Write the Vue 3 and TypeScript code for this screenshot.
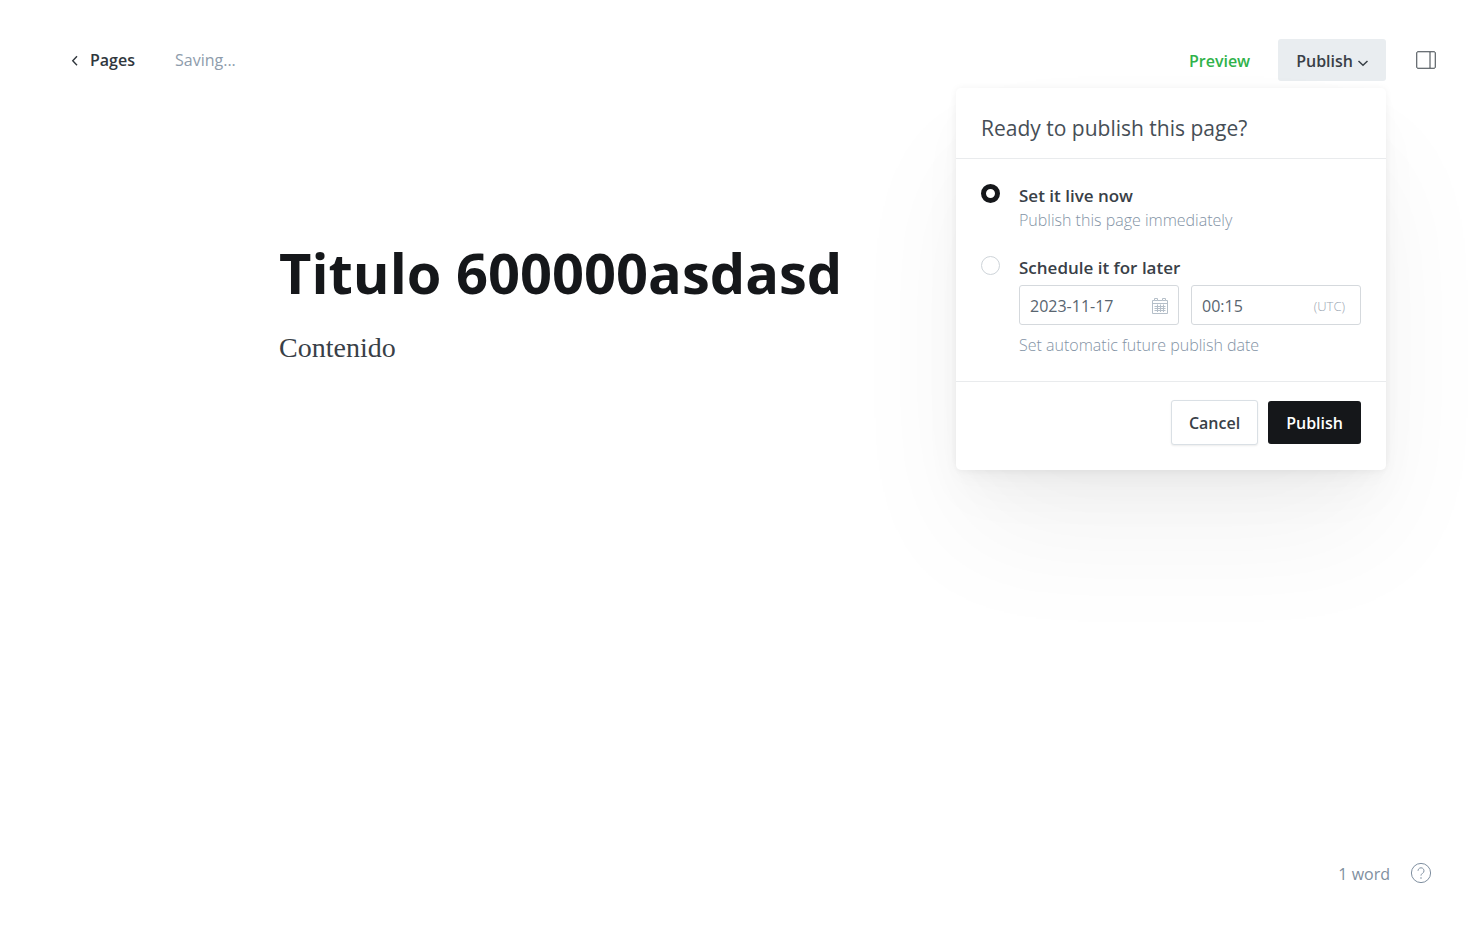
<script setup lang="ts">
import { ref } from 'vue'

const title = ref('Titulo 600000asdasd')
const content = ref('Contenido')
const mode = ref<'now' | 'later'>('now')
const date = ref('2023-11-17')
const time = ref('00:15')
const menuOpen = ref(true)
</script>

<template>
  <div class="editor">
    <header class="topbar">
      <a class="back" href="#pages">
        <svg width="8" height="12" viewBox="0 0 8 12" aria-hidden="true"><path d="M7 2.250 2.750 6.750 7 11.250" /></svg>
        <span>Pages</span>
      </a>
      <span class="status">Saving...</span>
      <div class="actions">
        <button type="button" class="preview">Preview</button>
        <div class="publish-menu">
          <button type="button" class="trigger" :aria-expanded="menuOpen" @click="menuOpen = !menuOpen">
            <span>Publish</span>
            <svg width="12" height="8" viewBox="0 0 12 8" aria-hidden="true"><path d="M1.500 2 6 6.250 10.500 2" /></svg>
          </button>
          <form v-if="menuOpen" class="dropdown" @submit.prevent>
            <h2 class="dropdown-title">Ready to publish this page?</h2>
            <div class="options">
              <div class="option">
                <input id="publish-now" v-model="mode" type="radio" name="mode" value="now" class="radio">
                <div class="option-body">
                  <label for="publish-now" class="option-label">Set it live now</label>
                  <p class="option-note">Publish this page immediately</p>
                </div>
              </div>
              <div class="option">
                <input id="publish-later" v-model="mode" type="radio" name="mode" value="later" class="radio">
                <div class="option-body">
                  <label for="publish-later" class="option-label">Schedule it for later</label>
                  <div class="fields">
                    <div class="field">
                      <input v-model="date" type="text" aria-label="Publish date">
                      <svg class="calendar" width="16" height="16" viewBox="0 0 16 16" aria-hidden="true">
                        <path d="M.5 2.500h2M5.500 2.500h5M13.500 2.500h2M.5 2.500v13h15v-13M.5 5.500h15M2.500 .5h3v2h-3zM10.500 .5h3v2h-3zM2.500 8.500h11M2.500 10.500h11M2.500 12.500h11M5.500 6.500v7.500M8.500 6.500v7.500M11.500 6.500v7.500" />
                      </svg>
                    </div>
                    <div class="field">
                      <input v-model="time" type="text" aria-label="Publish time">
                      <span class="zone">(UTC)</span>
                    </div>
                  </div>
                  <p class="option-note">Set automatic future publish date</p>
                </div>
              </div>
            </div>
            <footer class="dropdown-footer">
              <button type="button" class="cancel" @click="menuOpen = false">Cancel</button>
              <button type="submit" class="confirm">Publish</button>
            </footer>
          </form>
        </div>
        <button type="button" class="sidebar-toggle" aria-label="Settings">
          <svg width="20" height="18" viewBox="0 0 20 18" aria-hidden="true">
            <rect x=".75" y=".75" width="18.500" height="16.500" rx="1" /><path d="M14 1v16" />
          </svg>
        </button>
      </div>
    </header>

    <main class="canvas">
      <h1 class="title">{{ title }}</h1>
      <p class="content">{{ content }}</p>
    </main>

    <footer class="statusbar">
      <span class="count">1 word</span>
      <a href="#help" aria-label="Help">
        <svg width="22" height="22" viewBox="0 0 22 22" aria-hidden="true">
          <circle cx="11" cy="11" r="9.600" />
          <path d="M8 8.800a3 3 0 1 1 4.500 2.600c-1 .6-1.500 1-1.500 2.200" />
          <circle class="dot" cx="11" cy="16" r=".8" />
        </svg>
      </a>
    </footer>
  </div>
</template>

<style>
body {
  margin: 0;
  background: #fff;
}
</style>

<style scoped>
.editor {
  display: flex;
  flex-direction: column;
  min-height: 100vh;
  box-sizing: border-box;
  font-family: "Open Sans", "Noto Sans", sans-serif;
  font-size: 16px;
  line-height: 24px;
  color: #394047;
}

svg {
  display: block;
  flex: none;
  fill: none;
  stroke: currentColor;
  stroke-width: 1;
}

button {
  font: inherit;
  color: inherit;
  background: none;
  border: 0;
  padding: 0;
  cursor: pointer;
}

p,
h1,
h2 {
  margin: 0;
}

.topbar {
  display: flex;
  align-items: center;
  padding: 39px 47px 0 70px;
  height: 42px;
}

.back {
  display: flex;
  align-items: center;
  gap: 12px;
  color: #30373d;
  font-weight: 600;
  text-decoration: none;
}

.back svg {
  stroke-width: 1.400;
}

.status {
  margin-left: 40px;
  color: #8e9cac;
}

.actions {
  display: flex;
  align-items: center;
  margin-left: auto;
}

.preview {
  margin-right: 28px;
  padding-top: 2px;
  color: #30b24a;
  font-weight: 600;
}

.publish-menu {
  position: relative;
}

.trigger {
  display: flex;
  align-items: center;
  gap: 4px;
  height: 42px;
  padding: 2px 17px 0 18px;
  border-radius: 3px;
  background: #e9edf0;
  font-weight: 600;
}

.trigger svg {
  margin-top: 4px;
  stroke-width: 1.500;
}

.dropdown {
  position: absolute;
  top: calc(100% + 7px);
  right: 0;
  z-index: 1;
  width: 430px;
  border-radius: 5px;
  background: #fff;
  box-shadow:
    0 0 7px rgba(0, 0, 0, 0.05),
    0 8px 20px -4px rgba(0, 0, 0, 0.04),
    0 30px 50px -10px rgba(0, 0, 0, 0.04),
    0 70px 120px -8px rgba(0, 0, 0, 0.05);
}

.dropdown-title {
  padding: 26px 25px 16px;
  border-bottom: 1px solid #e9ebed;
  font-size: 21px;
  line-height: 28px;
  font-weight: 400;
  color: #464e56;
}

.options {
  display: flex;
  flex-direction: column;
  gap: 24px;
  padding: 25px 25px 24px;
}

.option {
  display: flex;
  align-items: flex-start;
  gap: 19px;
}

.option-body {
  flex: 1;
  min-width: 0;
}

.radio {
  appearance: none;
  flex: none;
  box-sizing: border-box;
  width: 19px;
  height: 19px;
  margin: 0;
  border: 1px solid #ced4d9;
  border-radius: 50%;
  background: #fff;
}

.radio:checked {
  border: 5px solid #15171a;
}

.option-label {
  display: block;
  font-size: 17px;
  font-weight: 600;
}

.option-note {
  font-size: 16px;
  font-weight: 300;
  color: #8393a5;
}

.fields {
  display: grid;
  grid-template-columns: 160px minmax(0, 1fr);
  gap: 12px;
  margin: 5px 0 8px;
}

.field {
  display: flex;
  align-items: center;
  height: 40px;
  box-sizing: border-box;
  padding: 2px 10px 0;
  border: 1px solid #d5d9dd;
  border-radius: 3px;
}

.field input {
  flex: 1;
  min-width: 0;
  padding: 0;
  border: 0;
  outline: 0;
  background: none;
  font: inherit;
  color: #596570;
}

.calendar {
  color: #b5bfc9;
}

.zone {
  padding-right: 5px;
  font-size: 13px;
  font-weight: 300;
  color: #9aa6b2;
}

.dropdown-footer {
  display: flex;
  align-items: center;
  justify-content: flex-end;
  gap: 10px;
  padding: 18px 25px 25px;
  border-top: 1px solid #e9ebed;
}

.cancel {
  height: 45px;
  padding: 0 17px;
  border: 1px solid #dae0e5;
  border-radius: 3px;
  background: #fff;
  box-shadow: 0 1px 2px rgba(0, 0, 0, 0.08);
  font-weight: 600;
}

.confirm {
  height: 43px;
  padding: 0 18px;
  border-radius: 3px;
  background: #15171a;
  color: #fff;
  font-weight: 600;
}

.sidebar-toggle {
  margin-left: 30px;
}

.canvas {
  flex: 1;
  width: calc(100% - 80px);
  max-width: 925px;
  box-sizing: border-box;
  margin: 0 auto;
  padding: 155px 0 0;
}

.title {
  font-size: 56px;
  line-height: 72px;
  font-weight: 700;
  color: #15171a;
}

.content {
  padding-top: 22px;
  font-family: "Liberation Serif", serif;
  font-size: 28px;
  line-height: 36px;
}

.statusbar {
  display: flex;
  align-items: center;
  justify-content: flex-end;
  gap: 20px;
  padding: 0 51px 45px;
  color: #7f8fa0;
}

.count {
  padding-top: 2px;
}

.statusbar a {
  color: inherit;
}

.dot {
  fill: currentColor;
  stroke: none;
}
</style>
